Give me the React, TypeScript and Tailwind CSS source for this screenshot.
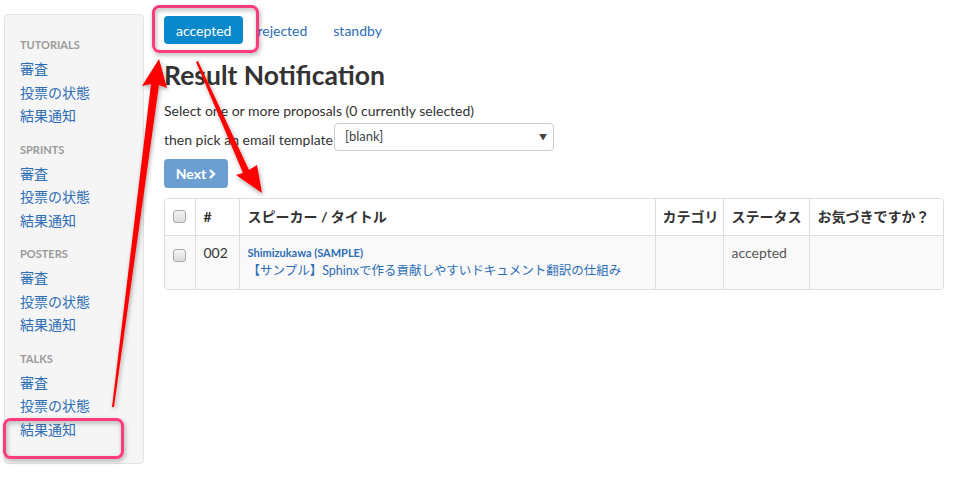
import React from 'react';

const SECTIONS = ['TUTORIALS', 'SPRINTS', 'POSTERS', 'TALKS'];
const LINKS = ['審査', '投票の状態', '結果通知'];

const font = { fontFamily: 'Lato, "Noto Sans CJK JP", sans-serif' };

const Checkbox = () => (
  <span className="inline-block w-[13px] h-[13px] rounded-[3px] border border-[#a9a9a9] bg-gradient-to-b from-[#f4f4f4] to-[#dcdcdc]" />
);

const Sidebar = () => (
  <aside className="w-[140px] shrink-0 mt-[14px] ml-[4px] h-[450px] bg-[#f5f5f5] border border-[#e3e3e3] rounded-[4px] pl-[15px] pt-[23px]">
    {SECTIONS.map((s) => (
      <div key={s} className="mb-[15px]">
        <div className="h-[14px] text-[11px] font-bold text-[#999] leading-[14px] mb-[5px]">{s}</div>
        {LINKS.map((l) => (
          <div key={l} className="h-[23.5px] overflow-visible flex items-center text-[14px] text-[#2d6db5]">{l}</div>
        ))}
      </div>
    ))}
  </aside>
);

const Main = () => (
  <main className="ml-[20px] pt-[16px] flex-1 pr-[26px] text-[#333]">
    <nav className="flex gap-[2px] text-[14px]">
      <span className="h-[28px] px-[12px] flex items-center rounded-[4px] bg-[#0a88cc] text-white">accepted</span>
      <span className="h-[28px] px-[12px] flex items-center text-[#2d6db5]">rejected</span>
      <span className="h-[28px] px-[12px] flex items-center text-[#2d6db5]">standby</span>
    </nav>
    <h1 className="text-[26.5px] font-bold leading-[30px] mt-[16px] text-[#333]">Result Notification</h1>
    <p className="text-[14px] leading-[18px] mt-[12px]">Select one or more proposals (0 currently selected)</p>
    <div className="flex items-center text-[14px] mt-[3px]">
      <span className="mt-[5px]">then pick an email template</span>
      <div className="ml-[1px] w-[220px] h-[28px] border border-[#ccc] rounded-[4px] bg-white flex items-center justify-between pl-[10px] pr-[6px]">
        <span className="text-[13px] text-[#444]">[blank]</span>
        <span className="text-[8px] text-[#444]">▼</span>
      </div>
    </div>
    <button className="mt-[8px] h-[29px] w-[64px] rounded-[4px] bg-[#6c9fd1] text-white font-bold text-[14px] flex items-center justify-center">
      Next
      <svg width="8" height="10" viewBox="0 0 8 10" className="ml-[2px]">
        <path d="M2 1 L6 5 L2 9" stroke="white" strokeWidth="2.4" fill="none" />
      </svg>
    </button>
    <div className="mt-[10px] border border-[#ddd] rounded-[4px] overflow-hidden">
      <table className="w-full table-fixed border-collapse text-[14px]">
        <colgroup>
          <col className="w-[30px]" />
          <col className="w-[44px]" />
          <col />
          <col className="w-[68px]" />
          <col className="w-[86px]" />
          <col className="w-[134px]" />
        </colgroup>
        <thead>
          <tr className="h-[36px] bg-white">
            <th className="text-center align-middle"><div className="flex justify-center"><Checkbox /></div></th>
            <th className="border-l border-[#ddd] text-left pl-[8px] font-bold">#</th>
            <th className="border-l border-[#ddd] text-left pl-[8px] font-bold">スピーカー / タイトル</th>
            <th className="border-l border-[#ddd] text-left pl-[7px] font-bold">カテゴリ</th>
            <th className="border-l border-[#ddd] text-left pl-[8px] font-bold">ステータス</th>
            <th className="border-l border-[#ddd] text-left pl-[8px] font-bold">お気づきですか？</th>
          </tr>
        </thead>
        <tbody>
          <tr className="h-[54px] bg-[#f9f9f9] border-t border-[#ddd] align-top">
            <td className="pt-[13px]"><div className="flex justify-center"><Checkbox /></div></td>
            <td className="border-l border-[#ddd] pl-[8px] pt-[6px]">002</td>
            <td className="border-l border-[#ddd] pl-[8px] pt-[10px]">
              <div className="text-[11px] font-bold text-[#2d6db5] leading-[14px]">Shimizukawa (SAMPLE)</div>
              <div className="text-[12.5px] text-[#2d6db5] leading-[21px] whitespace-nowrap">【サンプル】Sphinxで作る貢献しやすいドキュメント翻訳の仕組み</div>
            </td>
            <td className="border-l border-[#ddd]" />
            <td className="border-l border-[#ddd] pl-[8px] pt-[6px] text-[#555]">accepted</td>
            <td className="border-l border-[#ddd]" />
          </tr>
        </tbody>
      </table>
    </div>
  </main>
);

const Annotations = () => (
  <svg className="absolute inset-0 pointer-events-none" width="970" height="484" viewBox="0 0 970 484">
    <defs>
      <filter id="sh" x="-20%" y="-20%" width="140%" height="140%">
        <feDropShadow dx="1" dy="2" stdDeviation="2" floodColor="#000" floodOpacity="0.35" />
      </filter>
    </defs>
    <g filter="url(#sh)">
      <rect x="153.5" y="6.5" width="104" height="45" rx="6" fill="none" stroke="#ff3b7c" strokeWidth="3" />
      <rect x="4.5" y="419.5" width="118" height="38" rx="6" fill="none" stroke="#ff3b7c" strokeWidth="3" />
      <path d="M159 59 L167 88 L159 85 L114 407 L112 407 L151 84 L142 86 Z" fill="#ff0000" />
      <path d="M262 193 L236 175 L243 173 L196 62 L198 61 L249 170 L257 165 Z" fill="#ff0000" />
    </g>
  </svg>
);

export default function App() {
  return (
    <div className="relative w-[970px] h-[484px] bg-white overflow-hidden flex" style={font}>
      <Sidebar />
      <Main />
      <Annotations />
    </div>
  );
}
